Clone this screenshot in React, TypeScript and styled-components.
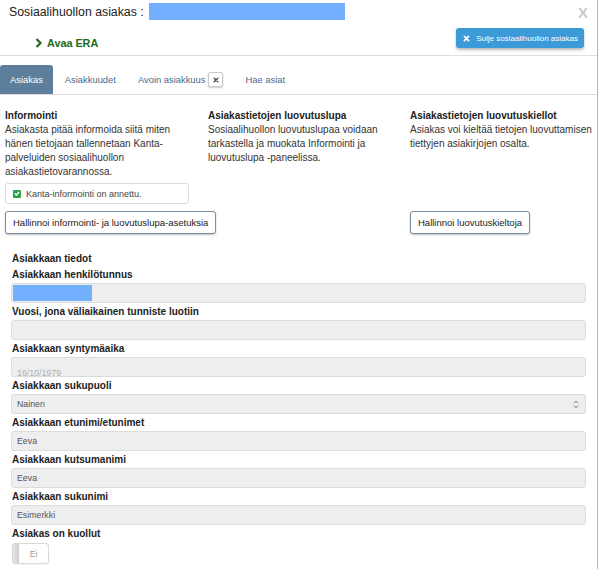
import React from "react";
import styled, { createGlobalStyle } from "styled-components";

const GlobalStyle = createGlobalStyle`
  html, body {
    margin: 0;
    padding: 0;
    background: #fff;
  }
  body {
    font-family: "Liberation Sans", Arial, Helvetica, sans-serif;
    color: #222;
  }
`;

const Modal = styled.div`
  width: 598px;
  min-height: 569px;
  box-sizing: border-box;
  border-right: 1px solid #b8b8b8;
  background: #fff;
`;

const Header = styled.div`
  padding: 0 13px 6px 9px;
  border-bottom: 1px solid #dedede;
`;

const TitleRow = styled.div`
  display: flex;
  align-items: center;
  height: 24px;
`;

const Title = styled.h1`
  margin: 0;
  font-size: 12.3px;
  font-weight: normal;
  color: #222;
  white-space: nowrap;
`;

const Masked = styled.span<{ $w: number; $h: number }>`
  display: inline-block;
  width: ${(p) => p.$w}px;
  height: ${(p) => p.$h}px;
  background: #72affc;
`;

const TitleMask = styled(Masked)`
  margin-left: 5px;
  margin-top: -1px;
`;

const CloseX = styled.span`
  margin-left: auto;
  margin-right: -4px;
  font-size: 15px;
  color: #c9c9c9;
  font-weight: bold;
`;

const ActionRow = styled.div`
  display: flex;
  justify-content: space-between;
  align-items: flex-start;
  margin-top: 4px;
`;

const EraLink = styled.a`
  display: flex;
  align-items: center;
  gap: 5px;
  margin: 9px 0 0 26px;
  color: #1d6a1d;
  font-weight: bold;
  font-size: 10.8px;
  text-decoration: none;
  cursor: pointer;
`;

const CloseButton = styled.button`
  display: flex;
  align-items: center;
  gap: 6px;
  height: 20px;
  padding: 0 6px 0 7px;
  border: none;
  border-radius: 3px;
  background: #3c9ad9;
  color: #fff;
  font-family: inherit;
  font-size: 8px;
  box-shadow: 0 2px 3px rgba(0, 0, 0, 0.28);
  cursor: pointer;
`;

const Tabs = styled.div`
  display: flex;
  gap: 2px;
  margin-top: 9px;
  border-bottom: 1px solid #dedede;
`;

const Tab = styled.div<{ $active?: boolean }>`
  display: flex;
  align-items: center;
  gap: 3px;
  height: 29px;
  padding: 0 10px;
  border-radius: 3px 3px 0 0;
  font-size: 9.4px;
  color: ${(p) => (p.$active ? "#fff" : "#4c6b88")};
  background: ${(p) => (p.$active ? "#5d7f9c" : "transparent")};
  cursor: pointer;
`;

const TabClose = styled.span`
  display: inline-flex;
  align-items: center;
  justify-content: center;
  width: 13px;
  height: 13px;
  border: 1px solid #c8c8c8;
  border-radius: 2px;
  background: #fff;
  box-shadow: 0 1px 2px rgba(0, 0, 0, 0.2);
`;

const Panels = styled.div`
  display: grid;
  grid-template-columns: 203px 202px 1fr;
  padding: 14px 0 0 5px;
`;

const Panel = styled.div`
  display: flex;
  flex-direction: column;
  align-items: flex-start;
  padding-right: 12px;

  &:last-child {
    padding-right: 0;
  }
`;

const PanelTitle = styled.div`
  font-size: 10px;
  font-weight: bold;
  line-height: 14px;
  color: #222;
`;

const PanelText = styled.p`
  margin: 0;
  font-size: 10px;
  line-height: 14px;
  color: #333;
`;

const CheckRow = styled.div`
  display: flex;
  align-items: center;
  gap: 5px;
  box-sizing: border-box;
  width: 184px;
  height: 21px;
  margin-top: 4px;
  padding-left: 7px;
  border: 1px solid #dcdcdc;
  border-radius: 3px;
  font-size: 9px;
  color: #444;
`;

const CheckMark = styled.span`
  display: inline-flex;
  align-items: center;
  justify-content: center;
  width: 8px;
  height: 8px;
  border-radius: 1px;
  background: #2ea54b;
`;

const PanelButton = styled.button`
  margin-top: 7px;
  height: 23px;
  padding: 0 7px;
  border: 1px solid #7a8fa2;
  border-radius: 3px;
  background: #fff;
  font-family: inherit;
  font-size: 9.5px;
  color: #222;
  box-shadow: 0 1px 2px rgba(0, 0, 0, 0.25);
  cursor: pointer;
  white-space: nowrap;
`;

const BottomButton = styled(PanelButton)`
  margin-top: auto;
`;

const Details = styled.section`
  padding: 18px 11px 0 11px;
`;

const SectionTitle = styled.div`
  padding-left: 1px;
  margin-bottom: 2px;
  font-size: 10px;
  font-weight: bold;
  line-height: 14px;
`;

const Field = styled.div`
  margin-bottom: 2px;
`;

const Label = styled.label`
  display: block;
  padding-left: 1px;
  margin-bottom: 1px;
  font-size: 10px;
  font-weight: bold;
  line-height: 14px;
  color: #222;
`;

const Input = styled.div<{ $faded?: boolean; $sink?: boolean }>`
  display: flex;
  align-items: ${(p) => (p.$sink ? "flex-end" : "center")};
  box-sizing: border-box;
  height: 20px;
  padding: 0 6px 0 5px;
  border: 1px solid #dcdcdc;
  border-radius: 3px;
  background: #eeeeee;
  font-size: 8.8px;
  color: ${(p) => (p.$faded ? "#b0b0b0" : "#555")};
  overflow: hidden;
`;

const SunkText = styled.span`
  line-height: 12px;
  margin-bottom: -3px;
`;

const InputMask = styled(Masked)`
  margin-left: -4px;
`;

const SelectArrows = styled.svg`
  margin-left: auto;
`;

const Toggle = styled.div`
  display: flex;
  box-sizing: border-box;
  width: 37px;
  height: 21px;
  margin: 2px 0 0 1px;
  border: 1px solid #d9d9d9;
  border-radius: 3px;
  background: #fff;
  overflow: hidden;
  box-shadow: 0 1px 1px rgba(0, 0, 0, 0.06);
`;

const Knob = styled.span`
  width: 5px;
  background: linear-gradient(to right, #e6e6e6, #d2d2d2);
  border-right: 1px solid #d0d0d0;
`;

const ToggleText = styled.span`
  flex: 1;
  display: flex;
  align-items: center;
  justify-content: center;
  font-size: 8.5px;
  color: #999;
`;

const Times = ({ size, color }: { size: number; color: string }) => (
  <svg width={size} height={size} viewBox="0 0 10 10">
    <path d="M2 2 L8 8 M8 2 L2 8" stroke={color} strokeWidth="2.4" strokeLinecap="round" />
  </svg>
);

const fields = [
  { label: "Asiakkaan etunimi/etunimet", value: "Eeva" },
  { label: "Asiakkaan kutsumanimi", value: "Eeva" },
  { label: "Asiakkaan sukunimi", value: "Esimerkki" },
];

export default function App() {
  return (
    <>
      <GlobalStyle />
      <Modal>
        <Header>
          <TitleRow>
            <Title>Sosiaalihuollon asiakas :</Title>
            <TitleMask $w={196} $h={17} />
            <CloseX>X</CloseX>
          </TitleRow>
          <ActionRow>
            <EraLink>
              <svg width="7" height="10" viewBox="0 0 7 10">
                <path d="M1.5 1 L5.5 5 L1.5 9" fill="none" stroke="#1d6a1d" strokeWidth="2.2" />
              </svg>
              Avaa ERA
            </EraLink>
            <CloseButton>
              <Times size={7} color="#fff" />
              Sulje sosiaalihuollon asiakas
            </CloseButton>
          </ActionRow>
        </Header>

        <Tabs>
          <Tab $active>Asiakas</Tab>
          <Tab>Asiakkuudet</Tab>
          <Tab>
            Avoin asiakkuus
            <TabClose>
              <Times size={6} color="#444" />
            </TabClose>
          </Tab>
          <Tab>Hae asiat</Tab>
        </Tabs>

        <Panels>
          <Panel>
            <PanelTitle>Informointi</PanelTitle>
            <PanelText>
              Asiakasta pitää informoida siitä miten hänen tietojaan tallennetaan Kanta-palveluiden
              sosiaalihuollon asiakastietovarannossa.
            </PanelText>
            <CheckRow>
              <CheckMark>
                <svg width="6" height="5" viewBox="0 0 7 6">
                  <path d="M1 3 L2.8 4.8 L6 1.2" fill="none" stroke="#fff" strokeWidth="1.6" />
                </svg>
              </CheckMark>
              Kanta-informointi on annettu.
            </CheckRow>
            <PanelButton>Hallinnoi informointi- ja luovutuslupa-asetuksia</PanelButton>
          </Panel>
          <Panel>
            <PanelTitle>Asiakastietojen luovutuslupa</PanelTitle>
            <PanelText>
              Sosiaalihuollon luovutuslupaa voidaan tarkastella ja muokata Informointi ja
              luovutuslupa -paneelissa.
            </PanelText>
          </Panel>
          <Panel>
            <PanelTitle>Asiakastietojen luovutuskiellot</PanelTitle>
            <PanelText>Asiakas voi kieltää tietojen luovuttamisen tiettyjen asiakirjojen osalta.</PanelText>
            <BottomButton>Hallinnoi luovutuskieltoja</BottomButton>
          </Panel>
        </Panels>

        <Details>
          <SectionTitle>Asiakkaan tiedot</SectionTitle>
          <Field>
            <Label>Asiakkaan henkilötunnus</Label>
            <Input>
              <InputMask $w={79} $h={16} />
            </Input>
          </Field>
          <Field>
            <Label>Vuosi, jona väliaikainen tunniste luotiin</Label>
            <Input />
          </Field>
          <Field>
            <Label>Asiakkaan syntymäaika</Label>
            <Input $faded $sink>
              <SunkText>16/10/1979</SunkText>
            </Input>
          </Field>
          <Field>
            <Label>Asiakkaan sukupuoli</Label>
            <Input>
              Nainen
              <SelectArrows width="6" height="9" viewBox="0 0 6 9">
                <path
                  d="M1 3.2 L3 1.2 L5 3.2 M1 5.8 L3 7.8 L5 5.8"
                  fill="none"
                  stroke="#666"
                  strokeWidth="0.9"
                />
              </SelectArrows>
            </Input>
          </Field>
          {fields.map((f) => (
            <Field key={f.label}>
              <Label>{f.label}</Label>
              <Input>{f.value}</Input>
            </Field>
          ))}
          <Field>
            <Label>Asiakas on kuollut</Label>
            <Toggle>
              <Knob />
              <ToggleText>Ei</ToggleText>
            </Toggle>
          </Field>
        </Details>
      </Modal>
    </>
  );
}
